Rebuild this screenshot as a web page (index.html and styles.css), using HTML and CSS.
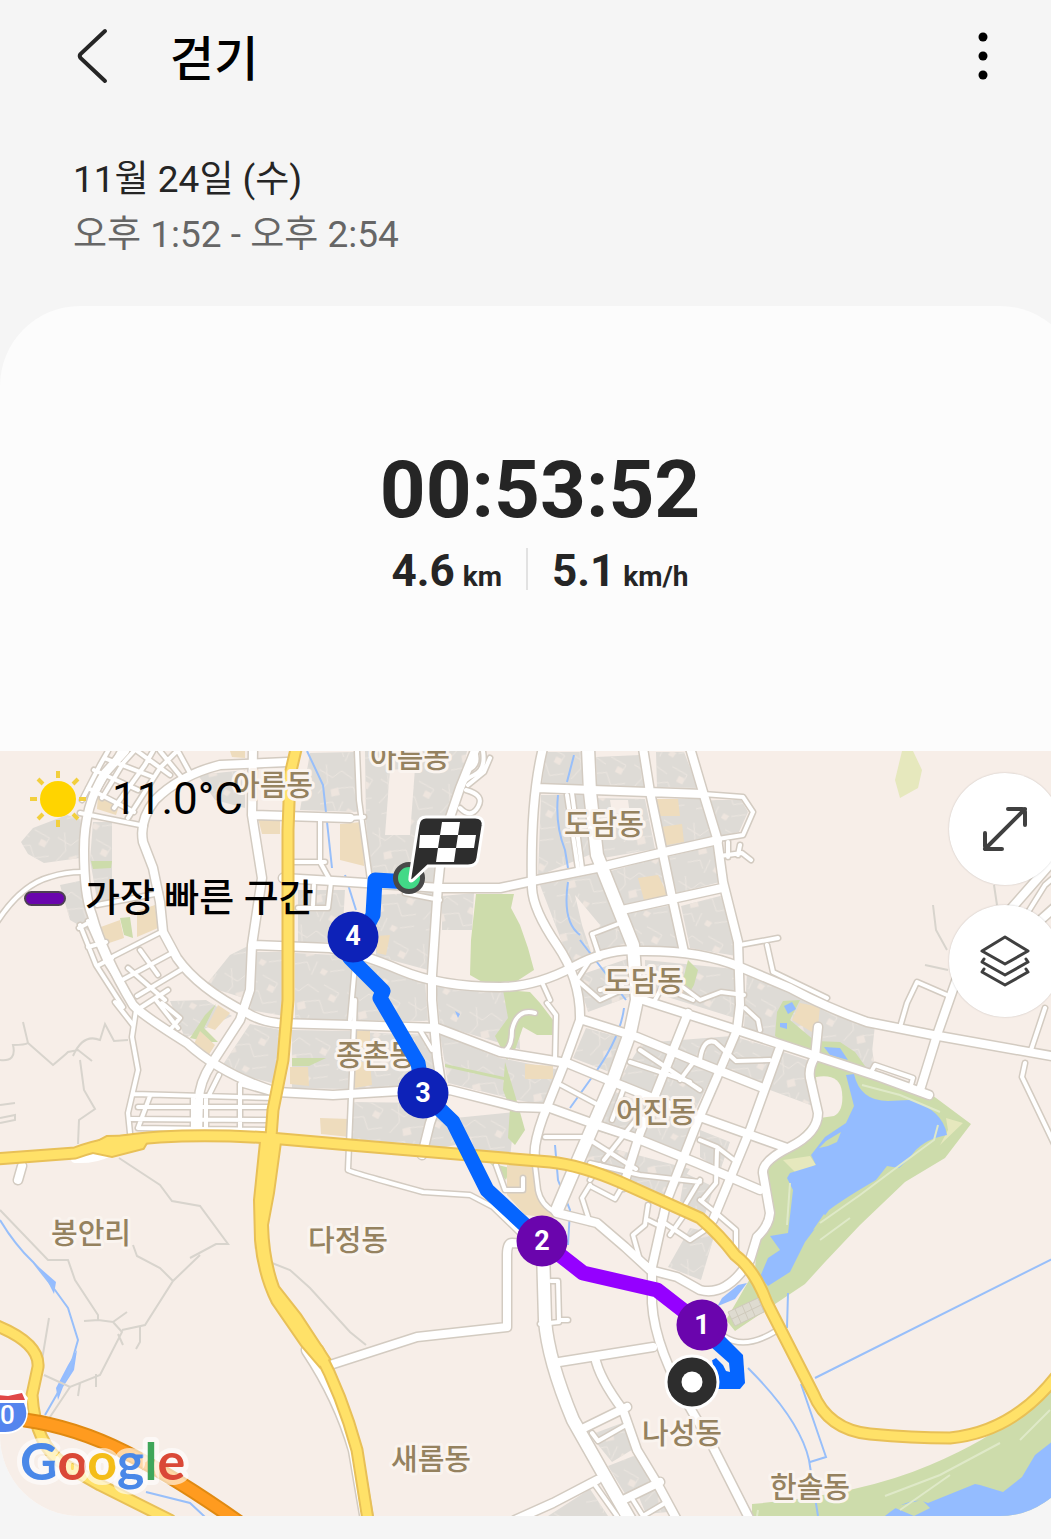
FILE: index.html
```html
<!DOCTYPE html>
<html lang="ko">
<head>
    <meta charset="UTF-8">
    <meta name="viewport" content="width=device-width, initial-scale=1.0">
    <title>걷기</title>
    <link rel="stylesheet" href="styles.css">
</head>
<body>
    <header class="header">
        <button class="icon-btn" type="button" aria-label="뒤로">
            <svg width="32" height="56" viewBox="0 0 32 56"><path d="M29 3 4.500 26Q3 28 4.500 30L29 53"/></svg>
        </button>
        <h1>걷기</h1>
        <button class="icon-btn more-btn" type="button" aria-label="더보기">
            <svg width="12" height="48" viewBox="0 0 12 48"><circle cx="6" cy="5" r="4.500"/><circle cx="6" cy="24" r="4.500"/><circle cx="6" cy="43" r="4.500"/></svg>
        </button>
    </header>

    <div class="period">
        <div class="date">11월 24일 (수)</div>
        <div class="time">오후 1:52 - 오후 2:54</div>
    </div>

    <main class="card">
        <section class="summary">
            <div class="duration">00:53:52</div>
            <div class="stats">
                <div class="stat"><span>4.6</span><span class="unit">km</span></div>
                <div class="stat"><span>5.1</span><span class="unit">km/h</span></div>
            </div>
        </section>

        <section class="map">
            <svg class="map-canvas" viewBox="0 751 1080 765" preserveAspectRatio="xMinYMin slice">
                <defs>
                    <pattern id="lots" width="62" height="54" patternUnits="userSpaceOnUse" patternTransform="rotate(9)">
                        <path class="lot" d="M2 8 16 14 24 6 36 12M8 2 12 20 4 32M22 24 38 20 44 32 58 28M30 36 26 50M40 4 56 10 52 20M8 42 20 38 24 46M44 44 58 40"/>
                        <path class="lot-fill" d="M16 26l7-3 3 7-8 3zM48 12l6 2-2 6-6-2zM36 42l6 2-3 5-5-2z"/>
                    </pattern>

                    <path id="blocks" d="M21 842 33 828 67 815 82 820 80 858 44 863 28 854ZM93 822 112 822 112 905 98 905 90 860ZM60 885 84 880 96 935 70 920ZM198 775 245 770 245 808 215 800ZM310 753 355 752 358 812 300 810ZM365 751 467 751 436 885 372 882 366 822ZM298 890 345 890 342 942 298 942ZM376 895 434 892 428 970 376 956ZM442 896 474 893 472 930 442 930ZM205 986 230 955 248 946 244 998ZM256 952 284 952 284 1016 250 1010ZM295 953 335 955 425 980 428 1021 295 1020ZM436 985 500 992 517 989 520 1049 440 1025ZM222 1066 250 1024 281 1030 276 1084 245 1076ZM292 1030 350 1031 350 1089 292 1088ZM356 1032 428 1035 437 1086 356 1092ZM440 1034 500 1058 560 1070 545 1105 517 1100 448 1083ZM352 1102 432 1103 480 1140 425 1151 350 1139ZM435 1120 515 1112 510 1158 470 1154ZM170 1001 206 1000 232 1016 185 1038Z
                        M546 752 582 752 582 786 542 784ZM541 795 584 795 594 853 538 876ZM596 757 640 755 645 787 597 787ZM597 798 645 799 655 849 603 858ZM656 752 684 752 698 788 657 787ZM657 799 700 799 714 838 665 848ZM540 885 600 873 628 948 572 968ZM607 872 658 858 670 900 622 907ZM667 857 718 845 720 882 677 893ZM626 914 672 905 680 947 640 947ZM681 906 724 895 736 956 690 948ZM577 976 627 959 634 995 588 1012ZM645 960 735 969 735 1018 645 990ZM586 1028 626 1039 612 1073 573 1058ZM642 1043 732 1036 695 1110 619 1080ZM706 800 741 800 748 812 739 832 720 836ZM747 972 826 1003 875 1025 870 1070 744 1027ZM610 1090 695 1123 680 1155 593 1130ZM588 1142 690 1169 665 1207 580 1167ZM739 1038 777 1049 767 1090 725 1073ZM777 1050 813 1062 813 1106 770 1090ZM700 1130 730 1142 720 1171 700 1157ZM685 1173 714 1187 704 1217 680 1201ZM690 1228 715 1233 701 1280 668 1267ZM590 1435 630 1420 635 1448 612 1462ZM608 1466 636 1455 652 1479 627 1497ZM548 1516 590 1489 608 1516ZM638 1495 655 1490 668 1512 646 1514ZM838 1040 870 1030 875 1072 850 1060Z"/>

                    <g id="minor">
                        <path d="M-5 925Q20 885 50 877Q65 872 82 872M80 813 145 826M97 905 160 893M82 800 100 765 108 751M92 800 112 765 120 751M102 798 124 762 134 751M114 808 145 765 153 751M128 818 160 768 177 751M94 770 138 790M104 758 153 777M137 751 170 775M88 788 134 812M178 751 190 773M160 751 182 778M80 925 96 965 123 1007M88 921 106 962 134 1005M79 928 90 922M88 947 106 942M97 966 112 958M112 957 159 933M122 980 172 953M137 996 184 968M140 950 158 975M128 968 165 1000M137 1010 168 990M156 1000 178 1028M115 1002 133 1025M162 1003 180 1018 170 1030"/>
                        <path d="M136 1010 132 1037 138 1070 128 1113 130 1133M134 1094 276 1098M138 1107 273 1107M131 1119 270 1120M138 1128 268 1130M150 1096 138 1128M193 1096 193 1132M206 1096 206 1132M240 1085 240 1132M219 1075 209 1095M275 1094 240 1084"/>
                        <path d="M320 818 320 862 330 880M294 862 325 862M331 882 328 908 298 908M314 885 313 905M357 751 359 800 370 880M350 818 364 817M440 900 405 893M355 965 350 1020M355 1000 348 1170Q350 1172 423 1192L470 1195 493 1207 523 1236M420 1030 432 1050M496 1165 505 1190 523 1190 523 1178M535 1165 538 1190Q541 1205 555 1212"/>
                        <path d="M483 751Q486 770 474 775T460 790M475 751Q480 765 468 770M490 758 484 772 468 785M466 790Q485 795 478 807T460 808M572 793 582 868M567 795 578 869M590 960 577 980 600 1000 626 988M592 934 618 924M592 934 600 958M506 1050Q512 1045 512 1030Q517 1008 535 1013M547 1003 556 1015 555 1060M541 980 550 1000M600 990 622 985"/>
                        <path d="M703 794 743 797 753 812 743 835 718 839M720 856 742 853 751 860M728 842 728 857M740 845 738 855M740 945 778 938M767 945 773 972 827 998M744 995 721 992 700 1000 680 985M745 1008 758 1020 760 1030M700 1060Q703 1038 715 1042L736 1061 770 1060M700 1140 717 1147 734 1160M717 1150 716 1183 702 1200M700 1200 715 1212 736 1230 736 1255M870 1074 875 1065 913 1078 911 1085"/>
                        <path d="M640 1050 700 1090M630 1062 690 1082M625 1085 612 1120M604 1160 638 1117M590 1140 636 1169M590 1163 640 1175 700 1182M600 1165 590 1180M545 1137 592 1137M561 1085 604 1108M590 1185 582 1198 590 1223M590 1186 615 1199 622 1187M648 1205 645 1225 633 1235 640 1260 663 1275M660 1220 690 1240 705 1230M670 1235 684 1215M648 1220 660 1226M695 1060 680 1080M700 1180 685 1205M655 1000 662 987 693 1000"/>
                        <path d="M1045 1008 1030 1053M1025 1063 1022 1077 1058 1152M907 1003 917 982 947 995M907 1003 900 1027M1080 855 1045 885 1020 925M551 1281 558 1281 559 1320 568 1320M540 1324 559 1322M592 1433 598 1441 626 1425M595 1485 617 1516M633 1500 643 1516 665 1503M700 1315 725 1337Q745 1350 776 1331"/>
                    </g>
                    <g id="streets">
                        <path d="M125 751 105 773Q84 805 84 850T92 915Q103 955 133 1005Q142 1015 187 1043Q222 1075 277 1092L333 1095 398 1091 450 1090 517 1107 550 1108 597 1125 633 1137 697 1163 760 1190"/>
                        <path d="M287 762 220 765Q180 775 155 800Q139 820 143 842L153 868 160 902 163 932 177 958Q198 988 247 1013Q260 1021 277 1023L350 1025 437 1028 500 1052 567 1063 613 1082 700 1117 787 1148"/>
                        <path d="M253 748 252 815 262 878 252 945 250 990 240 1020 212 1063Q199 1083 199 1100L198 1132M253 815 350 818M283 878 350 882 440 888 500 888 537 880 597 868 660 853 718 840M252 945 330 948Q360 953 400 970T500 987Q535 987 573 967T640 951Q700 950 740 967L790 988Q825 1007 867 1022L933 1035 1085 1062"/>
                        <path d="M476 748 460 788 443 838 438 885 432 975 432 1000 437 1057 442 1090 430 1123 422 1155M543 748Q530 800 532 888Q533 910 557 945T580 1020L563 1067 543 1117Q533 1145 535 1157M537 788 703 794M643 748 650 792 673 902 684 952M622 910 722 888M643 1000 737 1030 813 1055 880 1077 929 1095M583 1020 637 1037 700 1063 763 1088M780 1047 750 1130 713 1220M688 1013 640 1133 623 1187"/>
                        <path d="M690 748 703 792 717 838 723 882 738 942 740 1005 737 1030 717 1077 697 1123 667 1200 652 1267 652 1303Q655 1350 693 1413L713 1447 750 1520"/>
                        <path d="M818 1027 815 1057Q807 1070 811 1082L818 1113Q818 1133 790 1147T763 1173L770 1213Q769 1226 757 1237L750 1260Q727 1297 700 1290L677 1277 650 1270 625 1247 597 1223 557 1213M957 978 937 1035 920 1090M1060 853 1010 910M1080 885 1018 940M545 1245 512 1243Q507 1243 507 1255V1327L417 1337 330 1365M553 1363 653 1347M595 1357Q599 1378 623 1410L637 1450 657 1483 677 1520M580 1430 627 1407M597 1480 553 1503 515 1520M623 1500 660 1482M22 1166 18 1180"/>
                    </g>
                    <g id="avenues">
                        <path d="M588 748 590 792 597 855 613 895 633 945 637 1000 630 1033 613 1080 590 1133 577 1163 557 1210M543 1250 545 1320Q548 1360 573 1420L603 1473 630 1520M308 1350Q340 1398 355 1450L367 1520"/>
                    </g>
                    <g id="highways">
                        <path d="M297 745 290 775 288 830 288 1000 283 1060 273 1110 270 1150M318 1350Q342 1395 357 1450L368 1520"/>
                        <path d="M-5 1159 75 1153Q110 1140 160 1137T270 1138L350 1145 550 1162Q580 1165 620 1182L700 1218Q720 1235 735 1255Q755 1270 767 1303L813 1393Q828 1430 870 1434T950 1438Q1035 1430 1085 1330"/>
                        <path d="M-5 1325Q40 1343 38 1367L32 1395Q35 1445 65 1465L100 1485 170 1520"/>
                    </g>
                    <g id="wide-highways">
                        <path d="M261 1142 255 1200 256 1240Q259 1275 273 1303L302 1345 320 1366 329 1359 300 1315 278 1287Q268 1260 267 1225L273 1193 280 1142ZM83 1150 107 1137 150 1136 143 1148 112 1156Z"/>
                    </g>
                </defs>

                <rect class="land" y="751" width="1080" height="765"/>
                <use href="#blocks" class="blocks"/>
                <use href="#blocks" fill="url(#lots)"/>
                <path class="land" d="M390 770 415 768 410 835 385 835ZM610 800 628 800 630 815 612 813ZM575 895 600 925 592 955 582 925ZM445 931 470 931 470 975 442 970Z"/>

                <g class="park">
                    <path d="M476 894 514 894 511 908 520 925 528 948 534 970 517 981 484 983 470 975 471 940ZM503 990 530 992 540 1003 553 1020 553 1035 537 1035 523 1027 515 1050 507 1060 495 1036 508 1018ZM505 1062 512 1085 518 1105 525 1130 515 1145 508 1138 510 1108 503 1090ZM490 1163 510 1168 506 1180ZM91 861 112 861 111 868 93 869ZM292 1058 326 1058 309 1066 292 1066ZM120 918 130 917 133 938 124 935ZM205 1015 216 1004 204 1028 218 1042 208 1042 190 1038ZM445 1064 504 1077 504 1080 445 1067Z"/>
                    <path d="M783 1001 800 1000 790 1020 815 1041 840 1042 855 1052 870 1073 932 1095 971 1124 945 1158 905 1182 860 1225 825 1262 805 1284 735 1331 726 1320 755 1270 757 1237 770 1213 763 1173 790 1147 818 1115 811 1082 815 1063 775 1036 777 1012ZM752 1504Q860 1495 930 1465T1027 1405L1080 1360V1516H752Z"/>
                    <path d="M688 960 698 970 694 985 685 1000 683 980Z"/>
                </g>
                <path class="land" d="M816 1077Q840 1073 842 1092T834 1116L820 1118Z"/>
                <path class="meadow" d="M902 751 913 751 922 770 918 788 900 798 895 780ZM783 1160 810 1156 816 1165 797 1174ZM946 1118 963 1123 940 1145 948 1130Z"/>

                <g class="water">
                    <path d="M846 1075 854 1074Q860 1101 888 1101L910 1100Q943 1110 947 1135Q920 1140 910 1158L899 1168 887 1166 876 1180Q845 1198 829 1210L805 1242 790 1272 768 1286 760 1277 768 1258 780 1250 770 1236 788 1233 793 1190 787 1178 790 1173 816 1165 811 1155 825 1137 846 1123 854 1106Z"/>
                    <path d="M824 1047 840 1048 848 1060 830 1055ZM784 1006 792 1002 796 1009 788 1014ZM780 1023 787 1023 787 1029 780 1027ZM747 1283 735 1299 718 1306 710 1320 722 1298 738 1285ZM885 1516Q910 1495 928 1503L975 1484 980 1485 1003 1492 1022 1477 1035 1455 1080 1420V1516ZM31 1259 40 1268 56 1282 54 1294 46 1278ZM77 1350 74 1370 63 1387 58 1400 56 1388 68 1365ZM455 1011 460 1014 458 1018Z"/>
                </g>
                <path class="park" d="M826 1141 841 1132 837 1142 828 1146 819 1148ZM813 1230 824 1214 831 1222ZM893 1507 922 1500 930 1508 914 1516Z"/>
                <path class="trail" d="M862 1085 900 1095 940 1112M938 1125 934 1140 900 1165 860 1195 820 1223M790 1183 787 1225M820 1240 850 1218M885 1496 940 1475 1000 1443M1020 1440 1050 1410M900 1510 950 1475M758 1510 757 1516"/>

                <g class="school">
                    <path d="M98 794 120 803 116 815 97 809ZM258 818 280 818 280 834 262 834ZM230 751 245 751 245 758 232 757ZM340 824 362 822 364 866 340 860ZM98 928 120 920 124 938 103 945ZM137 911 155 905 158 928 137 937ZM218 1005 230 1013 215 1030 207 1027ZM200 1031 215 1045 208 1056 193 1046ZM290 1067 308 1067 309 1086 290 1084ZM320 1118 350 1119 350 1137 321 1134ZM355 1031 370 1031 370 1048 355 1048ZM355 1062 370 1062 372 1085 355 1088ZM377 936 390 935 386 955 377 953ZM656 799 678 799 680 816 659 816ZM661 827 682 824 684 842 662 846ZM638 878 658 875 668 895 644 900ZM525 1064 553 1066 553 1079 525 1079ZM507 1165 535 1165 543 1200 555 1218 525 1215 507 1195ZM800 1003 820 1007 817 1035 792 1020Z"/>
                </g>

                <g class="stream">
                    <path d="M307 751 323 785 332 868M574 755 567 782M558 795Q555 825 565 850L568 868M568 882Q562 922 580 935M580 940 603 970 626 1000M624 1008Q620 1040 590 1080L570 1108M555 1145 558 1180 570 1210 568 1245M345 875 356 910"/>
                    <path d="M0 1220Q15 1245 33 1262L55 1290 68 1308 78 1340 68 1375 45 1415M788 1293 787 1328M815 1378 1080 1245M748 1368Q800 1420 809 1460L818 1516M801 1384 826 1457 810 1462M146 1492 190 1503 205 1517"/>
                </g>
                <path class="trail-gray" d="M0 1060Q17 1062 13 1045 25 1045 28 1043L23 1022M28 1043 53 1065Q65 1055 68 1052L78 1050 92 1061M73 1056Q83 1033 100 1040L105 1024 114 1041 128 1040M80 1060 84 1090 95 1109 79 1120 78 1144M0 1105 15 1103M0 1118 15 1115 15 1120 0 1123M0 1210 48 1260 68 1260 75 1280 98 1315 98 1320 84 1321M98 1320 113 1322 127 1312M113 1322 122 1332 100 1375 70 1387 44 1375M118 1334 123 1345M122 1330 145 1325 173 1281 200 1255M140 1326 140 1342 136 1349M96 1374 96 1387M80 1383 78 1396M70 1387 48 1420M49 1318 42 1360M119 1158 160 1185 172 1201 200 1206 228 1244 216 1244 190 1258M133 1245 137 1256 160 1268 173 1281M272 1263 290 1270 310 1288 350 1332 366 1345M933 905 936 930 947 950M925 965 948 970M994 885 997 905"/>

                <use href="#minor" class="minor-edge"/>
                <use href="#streets" class="street-edge"/>
                <use href="#avenues" class="avenue-edge"/>
                <use href="#minor" class="minor"/>
                <use href="#streets" class="street"/>
                <use href="#avenues" class="avenue"/>
                <path class="street" d="M75 1159Q95 1160 108 1153"/>
                <use href="#highways" class="highway-edge"/>
                <use href="#wide-highways" class="wide-highway-edge"/>
                <use href="#highways" class="highway"/>
                <use href="#wide-highways" class="wide-highway"/>
                <path class="expressway-edge" d="M25 1420Q75 1427 125 1452T240 1523"/>
                <path class="expressway" d="M25 1420Q75 1427 125 1452T240 1523"/>
                <path class="hatch" d="M728 1312 758 1298 764 1312 735 1326ZM732 1319 761 1305M735 1309 741 1323M742 1305 748 1319M749 1302 755 1316"/>

                <path class="shield" d="M-20 1390 22 1390 28 1398Q26 1403 28 1412 27 1431 8 1434L-20 1434Z"/>
                <path class="shield-top" d="M-20 1393 8 1396 22 1393 25 1400H-20Z"/>
                <path class="shield-body" d="M-20 1403H24Q28 1412 25 1420 20 1432 5 1432H-20Z"/>
                <text class="shield-text" x="0" y="1424">0</text>

                <g class="places">
                    <text x="233" y="796">아름동</text>
                    <text x="370" y="768">아름동</text>
                    <text x="564" y="835">도담동</text>
                    <text x="604" y="992">도담동</text>
                    <text x="336" y="1066">종촌동</text>
                    <text x="616" y="1123">어진동</text>
                    <text x="51" y="1244">봉안리</text>
                    <text x="308" y="1251">다정동</text>
                    <text x="391" y="1470">새롬동</text>
                    <text x="642" y="1444">나성동</text>
                    <text x="770" y="1498">한솔동</text>
                </g>

                <text class="google" x="20" y="1480"><tspan class="g-blue">G</tspan><tspan class="g-red">o</tspan><tspan class="g-yellow">o</tspan><tspan class="g-blue">g</tspan><tspan class="g-green">l</tspan><tspan class="g-red">e</tspan></text>

                <path class="route" d="M409 882 375 880 373 915 350 958 383 991 380 998 418 1063 423 1093 453 1122 487 1190 542 1241"/>
                <path class="route fastest" d="M542 1241 583 1273 657 1290 702 1325"/>
                <path class="route-end" d="M715 1327 725 1337 743 1355 745 1383 740 1389 718 1389 712 1360 712 1345Z"/>
                <path class="route-gap" d="M711 1347 729 1363 730 1372 726 1371 723 1365 716 1358 711 1361Z"/>

                <circle class="finish-ring" cx="409" cy="878" r="13.500"/>
                <path class="flag" d="M426 817H475Q484 817 483 826L478 858Q477 866 468 866H428L413 880Q409 883 410 877L418 825Q419 817 426 817Z"/>
                <path class="flag-checks" d="M442 822H460L458 835H440ZM420 835H440L438 848H419ZM458 835H476L474 848H456ZM438 848H456L454 862H436Z"/>
                <circle class="start" cx="692" cy="1382" r="26"/>
                <circle class="start-hole" cx="692" cy="1382" r="10.500"/>

                <g class="marker">
                    <circle cx="353" cy="937" r="25.500"/><text x="353" y="945">4</text>
                    <circle cx="423" cy="1093" r="25.500"/><text x="423" y="1102">3</text>
                </g>
                <g class="marker marker-fast">
                    <circle cx="542" cy="1241" r="25.500"/><text x="542" y="1250">2</text>
                    <circle cx="702" cy="1325" r="25.500"/><text x="702" y="1334">1</text>
                </g>
            </svg>

            <div class="map-info">
                <div class="weather">
                    <svg width="56" height="56" viewBox="0 0 56 56">
                        <circle cx="28" cy="28" r="18"/>
                        <path d="M28 0v7M28 49v7M0 28h7M49 28h7M8 8l5 5M43 43l5 5M8 48l5-5M43 13l5-5"/>
                    </svg>
                    <span>11.0°C</span>
                </div>
                <div class="legend"><span class="swatch"></span>가장 빠른 구간</div>
            </div>

            <div class="map-controls">
                <button type="button" aria-label="지도 확대">
                    <svg width="48" height="48" viewBox="0 0 48 48"><path d="M4 44 44 4M27 4H41Q44 4 44 7V20M4 28V41Q4 44 7 44H21"/></svg>
                </button>
                <button type="button" aria-label="지도 유형">
                    <svg class="layers" width="52" height="52" viewBox="0 0 52 52"><path d="M26 2 49 16 26 29 3 16ZM5 24 3 27 26 40 49 27 47 24M5 34 3 37 26 50 49 37 47 34"/></svg>
                </button>
            </div>
        </section>
    </main>
</body>
</html>
```
FILE: styles.css
```css
* {
    box-sizing: border-box;
}

body {
    margin: 0;
    background: #f5f5f5;
    color: #252525;
    font-family: Roboto, "Noto Sans CJK KR", sans-serif;
    overflow-x: hidden;
}

button {
    border: none;
    padding: 0;
    cursor: pointer;
}

.header {
    display: flex;
    align-items: center;
    height: 112px;
    padding: 0 62px 0 76px;
}

.icon-btn {
    display: flex;
    background: none;
}

.icon-btn path {
    fill: none;
    stroke: #252525;
    stroke-width: 4;
    stroke-linecap: round;
}

.more-btn {
    margin-left: auto;
}

h1 {
    margin: 0 0 0 62px;
    padding-top: 8px;
    color: #000;
    font-size: 48px;
    font-weight: 500;
    line-height: 56px;
}

.period {
    padding: 40px 73px 44px;
    font-size: 37px;
    line-height: 55px;
}

.time {
    color: #666;
}

/* the card runs past the right edge of the screen */
.card {
    margin: 0 -29px 23px 0;
    border-radius: 80px;
    background: #fcfcfc;
    overflow: hidden;
}

.summary {
    display: flex;
    flex-direction: column;
    align-items: center;
    padding: 136px 0 161px;
    font-weight: 700;
}

.duration {
    font-size: 80px;
    line-height: 96px;
}

.stats {
    display: flex;
    margin-top: 10px;
}

.stat {
    display: flex;
    align-items: baseline;
    gap: 8px;
    height: 42px;
    padding: 0 24px;
    font-size: 44px;
    line-height: 46px;
}

.stat + .stat {
    border-left: 2px solid #e2e2e2;
}

.unit {
    font-size: 28px;
}

.map {
    position: relative;
}

.map-canvas {
    display: block;
    width: 100%;
    aspect-ratio: 1080 / 765;
}

.land {
    fill: #f7eee8;
}

.blocks {
    fill: #dedbd6;
}

.lot {
    fill: none;
    stroke: #ebe5df;
    stroke-width: 1;
}

.lot-fill {
    fill: #eee5de;
}

.park {
    fill: #cddcab;
}

.meadow {
    fill: #e6e8bd;
}

.school {
    fill: #eedcbd;
}

.water {
    fill: #94bcff;
}

.stream,
.trail,
.trail-gray {
    fill: none;
    stroke: #98bffa;
    stroke-width: 2;
}

.trail {
    stroke: #dfe9c8;
}

.trail-gray {
    stroke: #d8d4cd;
}

.minor-edge,
.street-edge,
.avenue-edge,
.minor,
.street,
.avenue,
.highway-edge,
.highway,
.expressway-edge,
.expressway {
    fill: none;
    stroke-linejoin: round;
    stroke-linecap: round;
}

.minor-edge,
.street-edge,
.avenue-edge {
    stroke: #d3cbc1;
}

.minor,
.street,
.avenue {
    stroke: #fff;
}

.minor-edge {
    stroke-width: 7;
}

.minor {
    stroke-width: 4;
}

.street-edge {
    stroke-width: 11;
}

.street {
    stroke-width: 8;
}

.avenue-edge {
    stroke-width: 15;
}

.avenue {
    stroke-width: 12;
}

.highway-edge,
.wide-highway-edge {
    stroke: #e8c057;
    stroke-width: 13;
}

.wide-highway-edge {
    stroke-width: 4;
}

.highway {
    stroke: #ffe168;
    stroke-width: 9;
}

.wide-highway {
    fill: #ffe168;
}

.expressway-edge {
    stroke: #e08a12;
    stroke-width: 15;
}

.expressway {
    stroke: #ff9b1f;
    stroke-width: 11;
}

.hatch {
    fill: #dedbd0;
    stroke: #cfcabc;
    stroke-width: 1;
}

.shield {
    fill: #fff;
}

.shield-top {
    fill: #e04848;
}

.shield-body {
    fill: #5585ee;
}

.shield-text {
    fill: #fff;
    font-size: 26px;
    font-weight: 500;
}

.places text {
    fill: #95825f;
    stroke: #faf4ef;
    stroke-width: 6;
    stroke-linejoin: round;
    paint-order: stroke;
    font-family: "Noto Sans CJK KR", sans-serif;
    font-size: 29px;
    font-weight: 500;
}

.google {
    stroke: rgba(255, 255, 255, 0.6);
    stroke-width: 10;
    stroke-linejoin: round;
    paint-order: stroke;
    font-family: Lato, sans-serif;
    font-size: 52px;
    font-weight: 700;
}

.g-blue {
    fill: #4a88e8;
}

.g-red {
    fill: #da4837;
}

.g-yellow {
    fill: #f4bd18;
}

.g-green {
    fill: #3fa65a;
}

.route {
    fill: none;
    stroke: #0565ff;
    stroke-width: 15;
    stroke-linejoin: round;
}

.fastest {
    stroke: #9500ff;
}

.route-end {
    fill: #0565ff;
}

.route-gap {
    fill: #f7eee8;
}

.finish-ring {
    fill: #42d987;
    stroke: #484848;
    stroke-width: 5;
}

.flag,
.start {
    fill: #2d2d2d;
    stroke: #fff;
    stroke-width: 3;
}

.flag-checks,
.start-hole {
    fill: #fff;
}

.marker {
    fill: #0d22b8;
}

.marker-fast {
    fill: #6a05ad;
}

.marker text {
    fill: #fff;
    font-size: 27px;
    font-weight: 700;
    text-anchor: middle;
}

.map-info {
    position: absolute;
    top: 20px;
    left: 24px;
    color: #000;
}

.weather {
    display: flex;
    align-items: center;
    gap: 26px;
    padding-left: 6px;
    font-size: 44px;
    line-height: 56px;
}

.weather circle {
    fill: #ffd400;
}

.weather path {
    fill: none;
    stroke: #f2cf3d;
    stroke-width: 4;
}

.legend {
    display: flex;
    align-items: center;
    gap: 19px;
    margin-top: 43px;
    font-size: 38px;
    font-weight: 500;
    line-height: 56px;
}

.swatch {
    width: 42px;
    height: 15px;
    border: 2px solid #4d4152;
    border-radius: 8px;
    background: #6a05ad;
}

.map-controls {
    position: absolute;
    top: 22px;
    right: 19px;
    display: flex;
    flex-direction: column;
    gap: 20px;
}

.map-controls button {
    display: flex;
    align-items: center;
    justify-content: center;
    width: 112px;
    height: 112px;
    border-radius: 50%;
    background: #fff;
    box-shadow: 0 0 2px rgba(0, 0, 0, 0.2);
}

.map-controls path {
    fill: none;
    stroke: #404040;
    stroke-width: 4;
    stroke-linecap: round;
    stroke-linejoin: round;
}

.map-controls .layers path {
    stroke-width: 3;
}
```
